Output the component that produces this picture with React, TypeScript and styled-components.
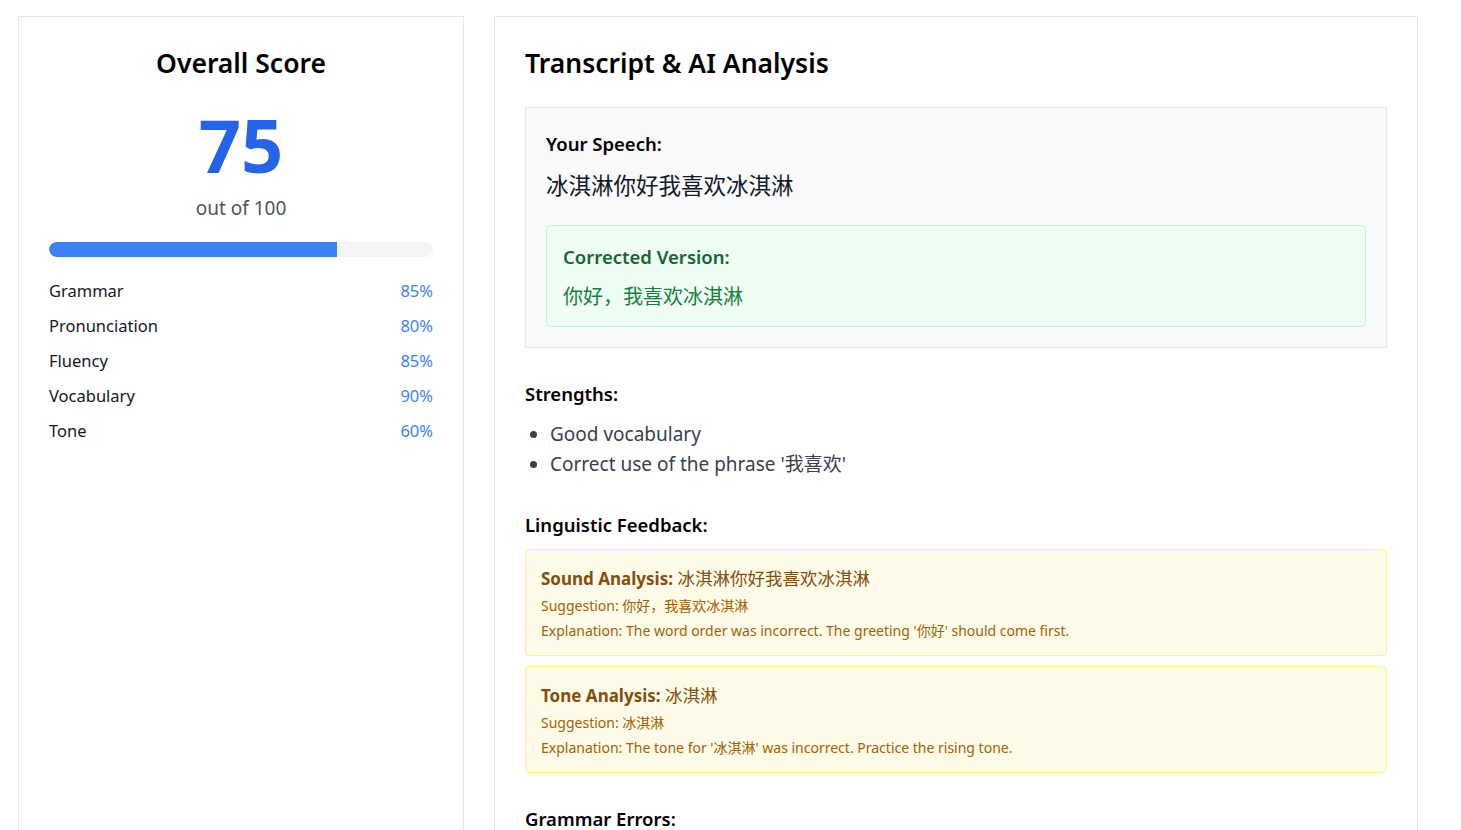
import React from "react";
import styled, { createGlobalStyle } from "styled-components";

const GlobalStyle = createGlobalStyle`
  html, body { margin: 0; padding: 0; background: #ffffff; }
  body {
    font-family: "Noto Sans", "Noto Sans CJK SC", sans-serif;
    color: #111827;
  }
  * { box-sizing: border-box; }
`;

const Page = styled.div`
  padding: 16px 0 0 18px;
  height: 830px;
  overflow: hidden;
`;

const Grid = styled.div`
  display: grid;
  grid-template-columns: 446px 924px;
  column-gap: 30px;
  align-items: start;
`;

const Card = styled.section`
  background: #ffffff;
  border: 1px solid #e5e7eb;
  padding: 30px;
  min-height: 900px;
`;

const CardTitle = styled.h2<{ $center?: boolean }>`
  margin: 0;
  font-size: 26.5px;
  line-height: 33px;
  font-weight: 600;
  color: #000000;
  text-align: ${(p) => (p.$center ? "center" : "left")};
`;

const BigScore = styled.div`
  margin-top: 27px;
  text-align: center;
  font-size: 74px;
  line-height: 76px;
  font-weight: 700;
  color: #2563eb;
`;

const OutOf = styled.div`
  text-align: center;
  font-size: 19px;
  line-height: 28px;
  color: #4b5563;
  margin-top: 11px;
`;

const Track = styled.div`
  margin-top: 20px;
  height: 15px;
  border-radius: 999px;
  background: #f3f4f6;
  overflow: hidden;
`;

const Fill = styled.div`
  height: 100%;
  background: #3b82f6;
  border-radius: 999px 0 0 999px;
`;

const Metrics = styled.div`
  margin-top: 22px;
  display: flex;
  flex-direction: column;
  gap: 11px;
`;

const MetricRow = styled.div`
  display: flex;
  justify-content: space-between;
  align-items: center;
  font-size: 16.5px;
  line-height: 24px;
`;

const MetricName = styled.span`
  color: #111827;
`;

const MetricValue = styled.span`
  color: #3b82f6;
`;

const SpeechBox = styled.div`
  margin-top: 27px;
  background: #f9fafb;
  border: 1px solid #e5e7eb;
  padding: 22px 20px 20px 20px;
`;

const Label = styled.h3`
  margin: 0;
  font-size: 18.5px;
  line-height: 28px;
  font-weight: 600;
  color: #000000;
`;

const SpeechText = styled.p`
  margin: 9px 0 0 0;
  font-size: 22.5px;
  line-height: 34px;
  color: #111827;
  font-family: "Noto Sans CJK SC", sans-serif;
`;

const CorrectBox = styled.div`
  margin-top: 24px;
  background: #f0fdf4;
  border: 1px solid #bbf7d0;
  border-radius: 4px;
  padding: 17px 16px 15px 16px;
`;

const CorrectLabel = styled(Label)`
  color: #166534;
`;

const CorrectText = styled.p`
  margin: 10px 0 0 0;
  font-size: 20px;
  line-height: 30px;
  color: #15803d;
  font-family: "Noto Sans CJK SC", sans-serif;
`;

const Section = styled.div`
  margin-top: 32px;
`;

const List = styled.ul`
  margin: 11px 0 0 0;
  padding-left: 25px;
  list-style: disc;
  color: #374151;
  font-size: 19px;
  line-height: 30px;
  li::marker { color: #374151; }
`;

const FeedbackList = styled.div`
  margin-top: 10px;
  display: flex;
  flex-direction: column;
  gap: 10px;
`;

const FeedbackCard = styled.div`
  background: #fefce8;
  border: 1px solid #fef08a;
  border-radius: 4px;
  padding: 15px 15px 14px 15px;
`;

const FeedbackHead = styled.div`
  font-size: 17px;
  line-height: 26px;
  color: #854d0e;
  font-family: "Noto Sans", "Noto Sans CJK SC", sans-serif;
`;

const FeedbackStrong = styled.strong`
  font-weight: 700;
`;

const FeedbackText = styled.span`
  font-size: 17.5px;
`;

const FeedbackLine = styled.div<{ $gap?: number }>`
  font-size: 14px;
  line-height: 20px;
  margin-top: ${(p) => p.$gap ?? 4}px;
  color: #a16207;
  font-family: "Noto Sans", "Noto Sans CJK SC", sans-serif;
`;

const metrics = [
  { name: "Grammar", value: 85 },
  { name: "Pronunciation", value: 80 },
  { name: "Fluency", value: 85 },
  { name: "Vocabulary", value: 90 },
  { name: "Tone", value: 60 },
];

const feedback = [
  {
    title: "Sound Analysis:",
    text: "冰淇淋你好我喜欢冰淇淋",
    suggestion: "你好，我喜欢冰淇淋",
    explanation: "The word order was incorrect. The greeting '你好' should come first.",
  },
  {
    title: "Tone Analysis:",
    text: "冰淇淋",
    suggestion: "冰淇淋",
    explanation: "The tone for '冰淇淋' was incorrect. Practice the rising tone.",
  },
];

export default function App() {
  const score = 75;
  return (
    <>
      <GlobalStyle />
      <Page>
        <Grid>
          <Card>
            <CardTitle $center>Overall Score</CardTitle>
            <BigScore>{score}</BigScore>
            <OutOf>out of 100</OutOf>
            <Track>
              <Fill style={{ width: `${score}%` }} />
            </Track>
            <Metrics>
              {metrics.map((m) => (
                <MetricRow key={m.name}>
                  <MetricName>{m.name}</MetricName>
                  <MetricValue>{m.value}%</MetricValue>
                </MetricRow>
              ))}
            </Metrics>
          </Card>
          <Card>
            <CardTitle>Transcript &amp; AI Analysis</CardTitle>
            <SpeechBox>
              <Label>Your Speech:</Label>
              <SpeechText>冰淇淋你好我喜欢冰淇淋</SpeechText>
              <CorrectBox>
                <CorrectLabel>Corrected Version:</CorrectLabel>
                <CorrectText>你好，我喜欢冰淇淋</CorrectText>
              </CorrectBox>
            </SpeechBox>
            <Section>
              <Label>Strengths:</Label>
              <List>
                <li>Good vocabulary</li>
                <li>Correct use of the phrase '我喜欢'</li>
              </List>
            </Section>
            <Section>
              <Label>Linguistic Feedback:</Label>
              <FeedbackList>
                {feedback.map((f) => (
                  <FeedbackCard key={f.title}>
                    <FeedbackHead>
                      <FeedbackStrong>{f.title}</FeedbackStrong> <FeedbackText>{f.text}</FeedbackText>
                    </FeedbackHead>
                    <FeedbackLine>Suggestion: {f.suggestion}</FeedbackLine>
                    <FeedbackLine $gap={5}>Explanation: {f.explanation}</FeedbackLine>
                  </FeedbackCard>
                ))}
              </FeedbackList>
            </Section>
            <Section>
              <Label>Grammar Errors:</Label>
            </Section>
          </Card>
        </Grid>
      </Page>
    </>
  );
}
